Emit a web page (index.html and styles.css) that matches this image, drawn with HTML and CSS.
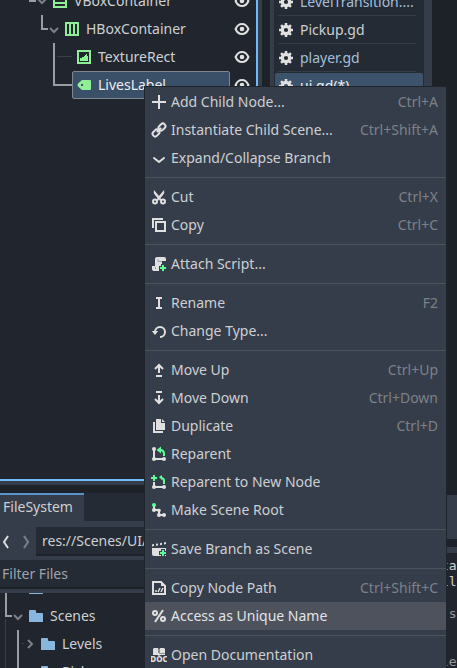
FILE: index.html
```html
<!DOCTYPE html>
<html lang="en">
<head>
<meta charset="utf-8">
<title>Scene editor</title>
<link rel="stylesheet" href="styles.css">
</head>
<body>
<svg class="defs" aria-hidden="true">
  <symbol id="eye" viewBox="0 0 16 16"><path d="M1.600 8C3 4.600 5.300 2.900 8 2.900S13 4.600 14.400 8C13 11.400 10.700 13.100 8 13.100S3 11.400 1.600 8z" fill="none" stroke="currentColor" stroke-width="2"/><circle cx="8" cy="8" r="2.300" fill="currentColor"/></symbol>
  <symbol id="gear" viewBox="0 0 16 16"><circle cx="8" cy="8" r="3.700" fill="none" stroke="currentColor" stroke-width="3.200"/><path d="M8 1v3M8 12v3M1 8h3M12 8h3M3.050 3.050l2 2M10.950 10.950l2 2M12.950 3.050l-2 2M5.050 10.950l-2 2" stroke="currentColor" stroke-width="2.600"/></symbol>
  <symbol id="folder" viewBox="0 0 16 16"><path d="M1 3a1 1 0 0 1 1-1h5a1 1 0 0 1 1 1v1a1 1 0 0 0 1 1h5a1 1 0 0 1 1 1v8H1z" fill="currentColor"/></symbol>
</svg>

<main class="workspace">
  <div class="column docks">
    <section class="scene-dock" aria-label="Scene">
      <ul class="tree scene-tree">
        <li class="row">
          <svg class="guide guide-52" viewBox="0 0 52 28"><path d="M30 0v14h6" class="line"/><path d="M38 12l4 4 4-4" class="chevron"/></svg>
          <svg class="icon green" viewBox="0 0 16 16"><path d="M2 2h12v12H2zM2 6h12M2 10h12" class="stroke"/></svg>
          <span class="name">VBoxContainer</span>
          <button class="eye" aria-label="Toggle visibility"><svg class="icon"><use href="#eye"/></svg></button>
        </li>
        <li class="row">
          <svg class="guide guide-64" viewBox="0 0 64 28"><path d="M42 0v14h6" class="line"/><path d="M50 13l4 4 4-4" class="chevron"/></svg>
          <svg class="icon green" viewBox="0 0 16 16"><path d="M2 2h12v12H2zM6 2v12M10 2v12" class="stroke"/></svg>
          <span class="name">HBoxContainer</span>
          <button class="eye" aria-label="Toggle visibility"><svg class="icon"><use href="#eye"/></svg></button>
        </li>
        <li class="row">
          <svg class="guide guide-76" viewBox="0 0 76 28"><path d="M54 0v28" class="line"/><path d="M57 13.500h15" class="thin"/></svg>
          <svg class="icon green" viewBox="0 0 16 16"><path d="M2 2h12v12H2z" class="stroke"/><path d="M4 12V9h2V8h2V7h1V6h1V5h1v2h1v5z" fill="currentColor"/></svg>
          <span class="name">TextureRect</span>
          <button class="eye" aria-label="Toggle visibility"><svg class="icon"><use href="#eye"/></svg></button>
        </li>
        <li class="row">
          <svg class="guide guide-72" viewBox="0 0 72 28"><path d="M54 0v14h18" class="line"/></svg>
          <span class="selected">
            <svg class="icon green" viewBox="0 0 16 16"><path fill-rule="evenodd" d="M6 3h8a1 1 0 0 1 1 1v8a1 1 0 0 1-1 1H6L2 9.500Q1 8 2 6.500zM5 7v2h2V7z" fill="currentColor"/></svg>
            <span class="name">LivesLabel</span>
          </span>
          <button class="eye" aria-label="Toggle visibility"><svg class="icon"><use href="#eye"/></svg></button>
        </li>
      </ul>
    </section>

    <section class="files-dock">
      <div class="tabs"><button class="tab">FileSystem</button></div>
      <div class="path-bar">
        <button class="nav" aria-label="Back"><svg viewBox="0 0 8 16"><path d="M6 2L2 8l4 6" class="stroke"/></svg></button>
        <button class="nav dim" aria-label="Forward"><svg viewBox="0 0 8 16"><path d="M2 2l4 6-4 6" class="stroke"/></svg></button>
        <input class="path" aria-label="Path" value="res://Scenes/UI/ui.tscn">
      </div>
      <input class="filter" aria-label="Filter Files" placeholder="Filter Files">
      <ul class="tree file-tree">
        <li class="row">
          <svg class="guide guide-28" viewBox="0 0 28 28"><path d="M6 0v28" class="line"/></svg>
          <svg class="icon blue"><use href="#folder"/></svg>
        </li>
        <li class="row">
          <svg class="guide guide-28" viewBox="0 0 28 28"><path d="M6 0v14h6" class="line"/><path d="M5.500 17v11" class="thin"/><path d="M14 13l4 4 4-4" class="chevron"/></svg>
          <svg class="icon blue"><use href="#folder"/></svg>
          <span class="name">Scenes</span>
        </li>
        <li class="row">
          <svg class="guide guide-40" viewBox="0 0 40 28"><path d="M18 0v28" class="line"/><path d="M5.500 0v28M21 13.500h3" class="thin"/><path d="M28 10l4 4-4 4" class="chevron"/></svg>
          <svg class="icon blue"><use href="#folder"/></svg>
          <span class="name">Levels</span>
        </li>
        <li class="row">
          <svg class="guide guide-40" viewBox="0 0 40 28"><path d="M18 0v28" class="line"/><path d="M5.500 0v28" class="thin"/></svg>
          <svg class="icon blue"><use href="#folder"/></svg>
          <span class="name">Pickups</span>
        </li>
      </ul>
    </section>
  </div>

  <div class="column editor">
    <div class="scripts">
      <ul class="script-list">
        <li class="script opened"><svg class="icon"><use href="#gear"/></svg>LevelTransition....</li>
        <li class="script"><svg class="icon"><use href="#gear"/></svg>Pickup.gd</li>
        <li class="script opened"><svg class="icon"><use href="#gear"/></svg>player.gd</li>
        <li class="script current"><svg class="icon"><use href="#gear"/></svg>ui.gd(*)</li>
      </ul>
    </div>
    <div class="toolbar"></div>
    <div class="output">
      <pre class="code"><b>ta</b>
<b>ll</b>

 s


le</pre>
    </div>
  </div>
</main>

<ul class="menu">
  <li><button class="item"><svg class="icon" viewBox="0 0 16 16"><path d="M7 1v6H1v2h6v6h2V9h6V7H9V1z" fill="currentColor"/></svg>Add Child Node...<kbd>Ctrl+A</kbd></button></li>
  <li><button class="item"><svg class="icon" viewBox="0 0 16 16"><g transform="rotate(-45 8 8)" fill="none" stroke="currentColor" stroke-width="2"><rect x="0" y="5.400" width="7.500" height="5.200" rx="2.600"/><rect x="8.500" y="5.400" width="7.500" height="5.200" rx="2.600"/><path d="M5 8h6"/></g></svg>Instantiate Child Scene...<kbd>Ctrl+Shift+A</kbd></button></li>
  <li><button class="item"><svg class="icon" viewBox="0 0 16 16"><path d="M3 8l5 4 5-4" class="stroke round"/></svg>Expand/Collapse Branch</button></li>
  <li class="separator"></li>
  <li><button class="item"><svg class="icon" viewBox="0 0 16 16"><path d="M3 1Q2 4 4 6l2.500 3-1 2 2 .5L8 10.300l.5 1.200 2-.5-1-2L12 6q2-2 1-5L8 7z" fill="currentColor"/><circle cx="4" cy="12.500" r="2" class="stroke"/><circle cx="12" cy="12.500" r="2" class="stroke"/></svg>Cut<kbd>Ctrl+X</kbd></button></li>
  <li><button class="item"><svg class="icon" viewBox="0 0 16 16"><path d="M2 11V2h10M5 5h9v9H5z" class="stroke"/></svg>Copy<kbd>Ctrl+C</kbd></button></li>
  <li class="separator"></li>
  <li><button class="item"><svg class="icon" viewBox="0 0 16 16"><path d="M6 1q-2 0-2 2v7H1v3q0 2 2 2h5v-5h3V5h4V3q0-2-2-2z" fill="currentColor"/><path d="M7 3v2.500h4M4.500 11v2" fill="none" stroke="#9b9ea4"/><path d="M11 9h2v2h2v2h-2v2h-2v-2H9v-2h2z" fill="#5fff97" stroke="#363d4a" stroke-width="2" paint-order="stroke"/></svg>Attach Script...</button></li>
  <li class="separator"></li>
  <li><button class="item"><svg class="icon" viewBox="0 0 16 16"><path d="M5 2h6v2H9v8h2v2H5v-2h2V4H5z" fill="currentColor"/></svg>Rename<kbd>F2</kbd></button></li>
  <li><button class="item"><svg class="icon" viewBox="0 0 16 16"><path d="M4 9a5 5 0 1 1 5 5" class="stroke"/><path d="M.8 8h6.400L4 12z" fill="currentColor"/></svg>Change Type...</button></li>
  <li class="separator"></li>
  <li><button class="item"><svg class="icon" viewBox="0 0 16 16"><path d="M8 11V3M4 7l4-4 4 4M5 14h6" class="stroke"/></svg>Move Up<kbd>Ctrl+Up</kbd></button></li>
  <li><button class="item"><svg class="icon" viewBox="0 0 16 16"><path d="M8 5v8M4 9l4 4 4-4M5 2h6" class="stroke"/></svg>Move Down<kbd>Ctrl+Down</kbd></button></li>
  <li><button class="item"><svg class="icon" viewBox="0 0 16 16"><path d="M5 1h5v4h4v7H5zM11 1l3 3h-3zM2 4h2v9h8v2H2z" fill="currentColor"/></svg>Duplicate<kbd>Ctrl+D</kbd></button></li>
  <li><button class="item"><svg class="icon" viewBox="0 0 16 16"><path d="M3 3v10h10" class="stroke"/><circle cx="3" cy="3" r="2" fill="currentColor"/><circle cx="3" cy="13" r="2" fill="currentColor"/><circle cx="13" cy="13" r="2" fill="currentColor"/><path d="M13 10V8q0-4-4-4" class="add-stroke"/><path d="M5.500 4L10 .5v7z" class="add"/></svg>Reparent</button></li>
  <li><button class="item"><svg class="icon" viewBox="0 0 16 16"><path d="M3 8v5h10" class="stroke"/><circle cx="3" cy="13" r="2" fill="currentColor"/><circle cx="13" cy="13" r="2" fill="currentColor"/><path d="M2 1h2v2h2v2H4v2H2V5H0V3h2zM8 3l3-2v5z" class="add"/><path d="M10 4q3 0 3 3v3" class="add-stroke"/></svg>Reparent to New Node</button></li>
  <li><button class="item"><svg class="icon" viewBox="0 0 16 16"><path d="M3 4v4h5v5h5" class="stroke"/><circle cx="3" cy="8" r="2" fill="currentColor"/><circle cx="8" cy="8.500" r="1.800" fill="currentColor"/><circle cx="8" cy="13" r="2" fill="currentColor"/><circle cx="13" cy="13" r="2" fill="currentColor"/><circle cx="3" cy="3" r="2" class="add"/></svg>Make Scene Root</button></li>
  <li class="separator"></li>
  <li><button class="item"><svg class="icon" viewBox="0 0 16 16"><path d="M1 7h14v8H3q-2 0-2-2zM1 3.500l2-.4v2L1 5.500zM5 2.800l2-.4v2l-2 .4zM9 2.200l2-.4v2l-2 .4zM13 1.500l2-.4v2l-2 .4z" fill="currentColor"/><path d="M11 9h2v2h2v2h-2v2h-2v-2H9v-2h2z" fill="#5fff97" stroke="#363d4a" stroke-width="2" paint-order="stroke"/></svg>Save Branch as Scene</button></li>
  <li class="separator"></li>
  <li><button class="item"><svg class="icon" viewBox="0 0 16 16"><path d="M2 2h8l4 4v8H2z" class="stroke"/><path d="M10 2v4h4z" fill="currentColor"/><path d="M7 12l2-4M10 12l2-4M4 11h2" fill="none" stroke="currentColor" stroke-width="1.500"/></svg>Copy Node Path<kbd>Ctrl+Shift+C</kbd></button></li>
  <li><button class="item hovered"><svg class="icon" viewBox="0 0 16 16"><circle cx="4" cy="5" r="2" class="stroke"/><circle cx="12" cy="11" r="2" class="stroke"/><path d="M12 2L4 14" class="stroke"/></svg>Access as Unique Name</button></li>
  <li class="separator"></li>
  <li><button class="item"><svg class="icon" viewBox="0 0 16 16"><path d="M3 1h3.500l1 .7v5L6.500 6.500H2V2zM13 1H9.500l-1 .7v5l1-.2H14V2zM2 6h12v2H9.500L8 9 6.500 8H2z" fill="currentColor"/><text x="8" y="15" class="doc">DOC</text></svg>Open Documentation</button></li>
</ul>
</body>
</html>
```

FILE: styles.css
```css
:root {
  --base: #1d2229;
  --dark: #21262e;
  --field: #252b34;
  --panel: #363d4a;
  --text: #cdcfd2;
  --accent: #70bafa;
}

* {
  box-sizing: border-box;
}

body {
  margin: 0;
  height: 100vh;
  overflow: hidden;
  position: relative;
  background: var(--base);
  color: var(--text);
  font: 14px/20px "Noto Sans", sans-serif;
}

ul {
  list-style: none;
  margin: 0;
  padding: 0;
}

button,
input {
  font: inherit;
  color: inherit;
  border: 0;
  background: none;
  margin: 0;
  padding: 0;
}

.defs {
  display: none;
}

.icon {
  width: 16px;
  height: 16px;
  flex: none;
  color: #e0e0e0;
}

.icon.green {
  color: #8eef97;
}

.icon.blue {
  color: #88b6dd;
}

.stroke {
  fill: none;
  stroke: currentColor;
  stroke-width: 2;
}

.round {
  stroke-linecap: round;
  stroke-linejoin: round;
}

.workspace {
  display: flex;
  gap: 8px;
  height: 100%;
}

.column {
  display: flex;
  flex-direction: column;
  gap: 8px;
}

.docks {
  width: 262px;
  flex: none;
}

.scene-dock {
  flex: 1;
  overflow: hidden;
  border: solid var(--panel);
  border-width: 0 4px 4px 0;
}

.scene-tree {
  height: 100%;
  background: var(--dark);
  border: solid var(--accent);
  border-width: 0 2px 2px 0;
  overflow: hidden;
}

.tree .row {
  display: flex;
  align-items: center;
  height: 28px;
}

.scene-tree .row:first-child {
  margin-top: -13px;
}

.guide {
  height: 28px;
  flex: none;
}

.guide-28 { width: 28px; }
.guide-40 { width: 40px; }
.guide-52 { width: 52px; }
.guide-64 { width: 64px; }
.guide-72 { width: 72px; }
.guide-76 { width: 76px; }

.line {
  fill: none;
  stroke: #9a9da1;
  stroke-width: 2;
}

.thin {
  fill: none;
  stroke: #3a3f47;
  stroke-width: 1;
}

.chevron {
  fill: none;
  stroke: #7d8086;
  stroke-width: 2;
}

.name {
  flex: 1;
  padding-left: 6px;
}

.eye {
  display: flex;
  padding: 0 6px 0 4px;
}

.selected {
  flex: 1;
  height: 28px;
  display: flex;
  align-items: center;
  padding-left: 3px;
  border: 1px solid #7d8792;
  border-radius: 2px;
  background: #3a5068;
  color: #eceef0;
}

.files-dock {
  flex: none;
  height: 175px;
  overflow: hidden;
  background: var(--panel);
}

.tabs {
  display: flex;
  background: var(--field);
}

.tab {
  height: 28px;
  padding: 0 11px 2px 3px;
  border-top: 2px solid #5593c8;
  background: var(--panel);
}

.path-bar {
  display: flex;
  align-items: center;
  gap: 12px;
  padding: 6px 4px 4px 2px;
}

.nav {
  display: flex;
  width: 8px;
  color: #e0e0e0;
}

.nav svg {
  width: 8px;
  height: 16px;
}

.nav.dim {
  color: #7b8089;
}

.path {
  flex: 1;
  min-width: 0;
  height: 29px;
  margin-left: -6px;
  padding-left: 6px;
  background: var(--field);
  border-bottom: 2px solid var(--base);
}

.filter {
  display: block;
  width: 100%;
  height: 29px;
  padding-left: 2px;
  background: var(--field);
  border-bottom: 2px solid var(--base);
}

.filter::placeholder {
  color: #a0a3a8;
  opacity: 1;
}

.file-tree {
  margin-top: 4px;
  background: var(--dark);
  overflow: hidden;
}

.file-tree .row:first-child {
  margin-top: -19px;
}

.editor {
  flex: 1;
  min-width: 0;
}

.scripts {
  flex: 1;
  width: 162px;
  overflow: hidden;
  padding: 0 8px 4px 4px;
  background: var(--panel);
}

.script-list {
  height: 100%;
  background: var(--field);
  overflow: hidden;
}

.script {
  display: flex;
  align-items: center;
  gap: 6px;
  height: 28px;
  margin: 0 8px 0 4px;
  border-bottom: 1px solid #363c45;
  white-space: nowrap;
}

.script:first-child {
  margin-top: -12px;
}

.script.opened {
  color: #a3bfdb;
}

.script.current {
  margin: 1px 1px 0;
  padding-left: 3px;
  height: 26px;
  border: 0;
  border-radius: 2px;
  background: #3c536b;
  color: #eceef0;
}

.toolbar {
  flex: none;
  height: 44px;
  background: var(--panel);
}

.output {
  flex: none;
  height: 121px;
  padding-left: 171px;
  border-top: 6px solid var(--panel);
  background: var(--dark);
  overflow: hidden;
}

.code {
  margin: 5px 0 0;
  color: #94979c;
  font: 13px/16px "DejaVu Sans Mono", monospace;
}

.code b {
  color: var(--text);
  font-weight: normal;
}

.menu {
  position: absolute;
  top: 87px;
  left: 145px;
  right: 11px;
  padding: 1px 0;
  background: var(--panel);
  box-shadow: 0 0 0 1px #20252c;
}

.item {
  display: flex;
  align-items: center;
  gap: 4px;
  width: 100%;
  height: 28px;
  padding: 0 8px 0 6px;
  text-align: left;
  white-space: nowrap;
}

.item.hovered {
  background: #4d525d;
  color: #e2e3e5;
}

.item kbd {
  margin-left: auto;
  font: inherit;
  color: #7c8189;
}

.separator {
  height: 11px;
  padding-top: 5px;
}

.separator::before {
  content: "";
  display: block;
  height: 1px;
  background: #4c525e;
}

.add {
  fill: #5fff97;
}

.add-stroke {
  fill: none;
  stroke: #5fff97;
  stroke-width: 2;
}

.doc {
  font: 800 8px "Noto Sans", sans-serif;
  text-anchor: middle;
  fill: currentColor;
}
```
